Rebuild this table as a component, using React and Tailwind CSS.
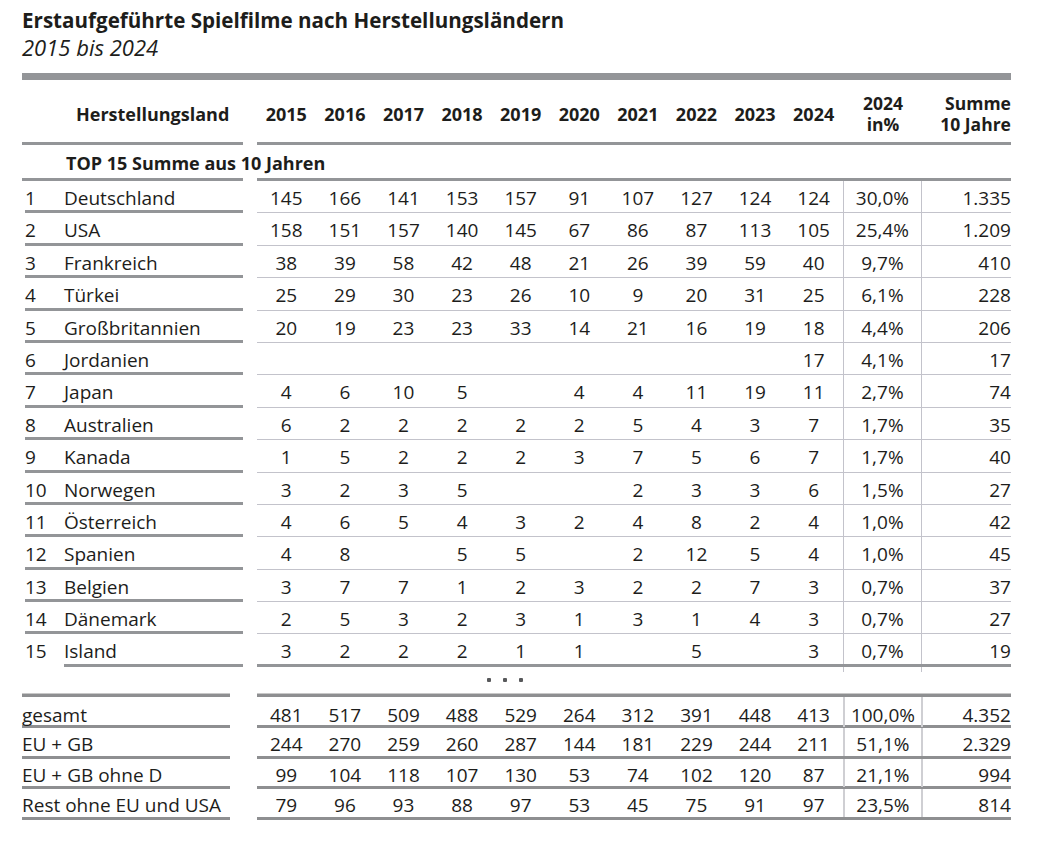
const rows = [
  [1, 'Deutschland', [145, 166, 141, 153, 157, 91, 107, 127, 124, 124], '30,0%', '1.335'],
  [2, 'USA', [158, 151, 157, 140, 145, 67, 86, 87, 113, 105], '25,4%', '1.209'],
  [3, 'Frankreich', [38, 39, 58, 42, 48, 21, 26, 39, 59, 40], '9,7%', '410'],
  [4, 'Türkei', [25, 29, 30, 23, 26, 10, 9, 20, 31, 25], '6,1%', '228'],
  [5, 'Großbritannien', [20, 19, 23, 23, 33, 14, 21, 16, 19, 18], '4,4%', '206'],
  [6, 'Jordanien', ['', '', '', '', '', '', '', '', '', 17], '4,1%', '17'],
  [7, 'Japan', [4, 6, 10, 5, '', 4, 4, 11, 19, 11], '2,7%', '74'],
  [8, 'Australien', [6, 2, 2, 2, 2, 2, 5, 4, 3, 7], '1,7%', '35'],
  [9, 'Kanada', [1, 5, 2, 2, 2, 3, 7, 5, 6, 7], '1,7%', '40'],
  [10, 'Norwegen', [3, 2, 3, 5, '', '', 2, 3, 3, 6], '1,5%', '27'],
  [11, 'Österreich', [4, 6, 5, 4, 3, 2, 4, 8, 2, 4], '1,0%', '42'],
  [12, 'Spanien', [4, 8, '', 5, 5, '', 2, 12, 5, 4], '1,0%', '45'],
  [13, 'Belgien', [3, 7, 7, 1, 2, 3, 2, 2, 7, 3], '0,7%', '37'],
  [14, 'Dänemark', [2, 5, 3, 2, 3, 1, 3, 1, 4, 3], '0,7%', '27'],
  [15, 'Island', [3, 2, 2, 2, 1, 1, '', 5, '', 3], '0,7%', '19'],
];

const totals = [
  ['gesamt', [481, 517, 509, 488, 529, 264, 312, 391, 448, 413], '100,0%', '4.352'],
  ['EU + GB', [244, 270, 259, 260, 287, 144, 181, 229, 244, 211], '51,1%', '2.329'],
  ['EU + GB ohne D', [99, 104, 118, 107, 130, 53, 74, 102, 120, 87], '21,1%', '994'],
  ['Rest ohne EU und USA', [79, 96, 93, 88, 97, 53, 45, 75, 91, 97], '23,5%', '814'],
];

const years = [2015, 2016, 2017, 2018, 2019, 2020, 2021, 2022, 2023, 2024];

function SplitLine() {
  return (
    <div className="flex h-[3px]">
      <div className="w-[221px] bg-[#939598]" />
      <div className="w-[14px]" />
      <div className="w-[754px] bg-[#939598]" />
    </div>
  );
}

export default function App() {
  return (
    <div
      className="w-[1039px] h-[866px] bg-white text-[#1d1d1b] pl-[22px] pr-[28px] pt-[6px]"
      style={{ fontFamily: '"Open Sans", "Noto Sans", sans-serif' }}
    >
      <div className="text-[20.6px] font-bold leading-[28px]">
        Erstaufgeführte Spielfilme nach Herstellungsländern
      </div>
      <div className="text-[22px] italic leading-[26px]">2015 bis 2024</div>

      <div className="mt-[13px] h-[7px] bg-[#939598]" />

      {/* header */}
      <div className="flex h-[62px] items-center">
        <div className="w-[221px] pl-[54px] text-[18px] font-bold leading-[22px] pt-[6px]">
          Herstellungsland
        </div>
        <div className="w-[14px]" />
        <div className="grid w-[754px] grid-cols-[repeat(10,58.6px)_78px_90px] items-center pt-[6px] text-[18px] font-bold">
          {years.map((y) => (
            <div key={y} className="text-center leading-[22px]">
              {y}
            </div>
          ))}
          <div className="flex flex-col items-center pl-[2px] text-[17.5px]">
            <div className="leading-[21px]">2024</div>
            <div className="leading-[21px]">in%</div>
          </div>
          <div className="flex flex-col items-end text-[17.5px]">
            <div className="leading-[21px]">Summe</div>
            <div className="leading-[21px]">10 Jahre</div>
          </div>
        </div>
      </div>
      <SplitLine />

      <div className="h-[33px] pl-[44px] pt-[6px] text-[18px] font-bold leading-[24px]">
        TOP 15 Summe aus 10 Jahren
      </div>
      <SplitLine />

      {/* country rows */}
      {rows.map(([n, name, vals, pct, sum]) => {
        const last = n === 15;
        return (
          <div key={n} className="flex h-[32.4px] text-[19px] leading-[24px]">
            <div
              className={
                'ml-[3px] flex w-[218px] ' +
                (last ? '' : 'border-b-[3px] border-[#939598]')
              }
            >
              <div className="w-[39px] pt-[5px]">{n}</div>
              <div
                className={
                  'flex-1 pt-[5px] ' + (last ? 'border-b-[3px] border-[#939598]' : '')
                }
              >
                {name}
              </div>
            </div>
            <div className="w-[14px]" />
            <div
              className={
                'grid w-[754px] grid-cols-[repeat(10,58.6px)_78px_90px] ' +
                (last ? 'border-b-[3px] border-[#939598]' : 'border-b border-[#c3c3cb]')
              }
            >
              {vals.map((v, i) => (
                <div key={i} className="text-center pt-[5px]">
                  {v}
                </div>
              ))}
              <div className="border-l border-[#c3c3cb] text-center pt-[5px]">{pct}</div>
              <div className="border-l border-[#c3c3cb] text-right pt-[5px]">{sum}</div>
            </div>
          </div>
        );
      })}
      <div className="flex h-[5px]">
        <div className="w-[235px]" />
        <div className="grid w-[754px] grid-cols-[repeat(10,58.6px)_78px_90px]">
          <div className="col-span-10" />
          <div className="border-l border-[#c3c3cb]" />
          <div className="border-l border-[#c3c3cb]" />
        </div>
      </div>

      {/* dots */}
      <div className="flex h-[17px] items-center pl-[465px] gap-[12px]">
        <div className="h-[4px] w-[4px] rounded-[1px] bg-[#58595b]" />
        <div className="h-[4px] w-[4px] rounded-[1px] bg-[#58595b]" />
        <div className="h-[4px] w-[4px] rounded-[1px] bg-[#58595b]" />
      </div>

      {/* totals */}
      <div className="mt-[4px] flex h-[4px]">
        <div className="w-[208px] border-t border-[#c8c8c8] bg-[#8e8f91]" />
        <div className="w-[27px]" />
        <div className="w-[754px] border-t border-[#c8c8c8] bg-[#8e8f91]" />
      </div>
      {totals.map(([label, vals, pct, sum], idx) => {
        const pt = idx === 0 ? 'pt-[6px]' : 'pt-[4px]';
        return (
          <div
            key={label}
            className={
              'flex text-[19px] leading-[24px] ' + (idx === 0 ? 'h-[31.5px]' : 'h-[30.5px]')
            }
          >
            <div className={'w-[208px] border-b-[3px] border-[#8e8f91] ' + pt}>{label}</div>
            <div className="w-[27px]" />
            <div className="grid w-[754px] grid-cols-[repeat(10,58.6px)_78px_90px] border-b-[3px] border-[#8e8f91]">
              {vals.map((v, i) => (
                <div key={i} className={'text-center ' + pt}>
                  {v}
                </div>
              ))}
              <div className={'border-l-2 border-[#cfcfd3] text-center ' + pt}>{pct}</div>
              <div className={'border-l-2 border-[#cfcfd3] text-right ' + pt}>{sum}</div>
            </div>
          </div>
        );
      })}
    </div>
  );
}
